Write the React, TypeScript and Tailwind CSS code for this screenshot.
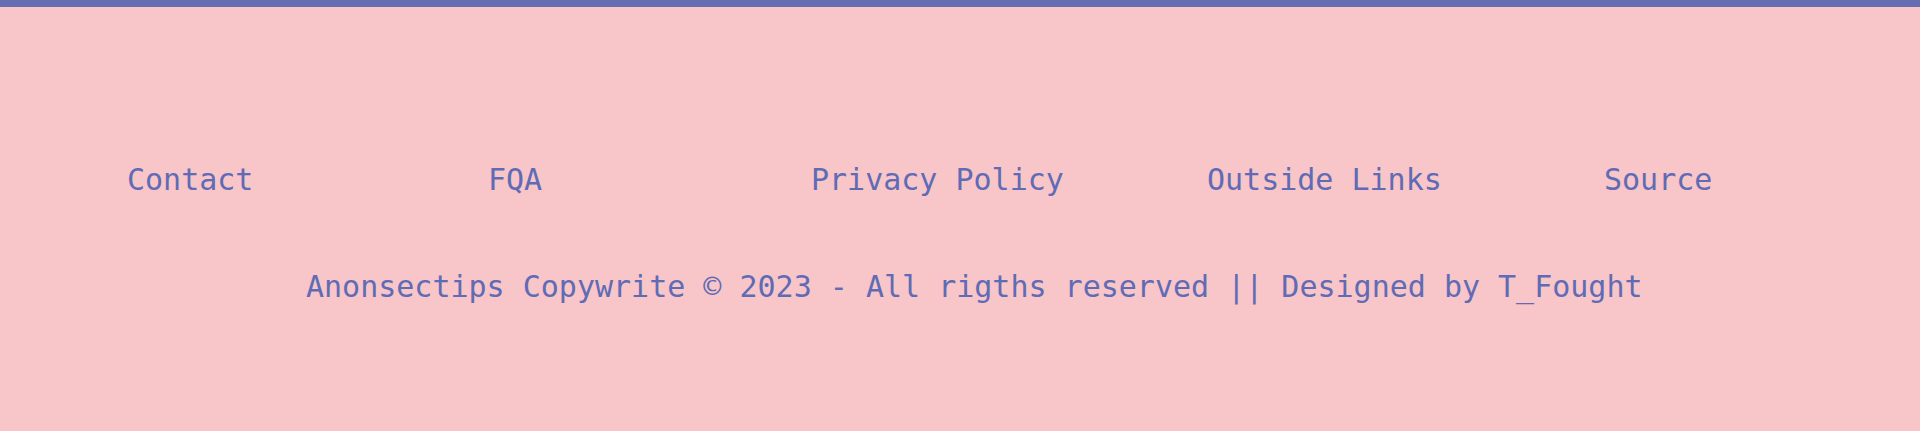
import React from 'react';

const links = ['Contact', 'FQA', 'Privacy Policy', 'Outside Links', 'Source'];

export default function App() {
  return (
    <footer className="w-[1920px] h-[431px] bg-[#f8c5c8] text-[#5f6bb5] font-['DejaVu_Sans_Mono','Liberation_Mono',monospace] text-[30px] leading-[36px]">
      {/* top accent bar */}
      <div className="h-[7px] bg-[#656eb3]" />

      <nav className="mt-[155px] pl-[127px] grid grid-cols-[361px_323px_396px_397px_auto]">
        {links.map((l) => (
          <a key={l} href="#" className="whitespace-nowrap">
            {l}
          </a>
        ))}
      </nav>

      <p className="mt-[71px] pl-[306px] whitespace-nowrap">
        Anonsectips Copywrite © 2023 - All rigths reserved || Designed by T_Fought
      </p>
    </footer>
  );
}
